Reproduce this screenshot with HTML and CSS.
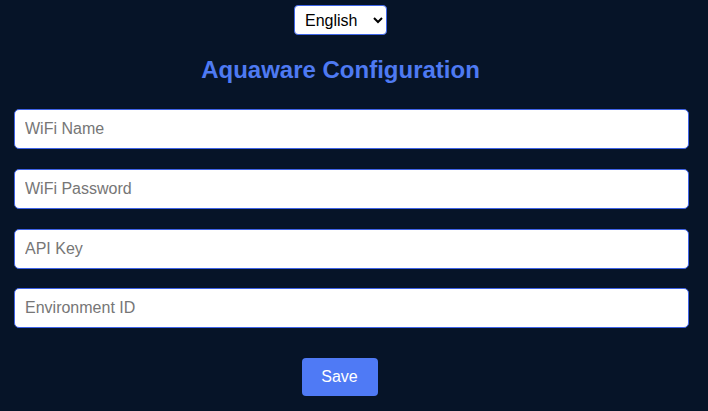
FILE: index.html
```html
<!DOCTYPE html>
<html>
<head>
<meta charset="utf-8">
<link rel="stylesheet" href="styles.css">
</head>
<body>
<div class="page">
  <div class="top">
    <select class="lang">
      <option>English</option>
    </select>
  </div>
  <h1 class="title">Aquaware Configuration</h1>
  <form class="form">
    <input class="field" type="text" placeholder="WiFi Name">
    <input class="field" type="password" placeholder="WiFi Password">
    <input class="field" type="text" placeholder="API Key">
    <input class="field" type="text" placeholder="Environment ID">
    <div class="actions">
      <button class="save" type="button">Save</button>
    </div>
  </form>
</div>
</body>
</html>
```
FILE: styles.css
```css
html, body {
  margin: 0;
  padding: 0;
  background: #061428;
  height: 100%;
}
body {
  font-family: "Liberation Sans", Arial, sans-serif;
  overflow: hidden;
}
.page {
  width: 681px;
  text-align: center;
}
.top {
  padding-top: 5px;
  height: 30px;
}
.lang {
  width: 93px;
  height: 30px;
  font-family: "Liberation Sans", Arial, sans-serif;
  font-size: 16px;
  color: #000;
  background: #fff;
  border: 1px solid #3f66e8;
  border-radius: 4px;
  padding: 0 4px 0 6px;
  vertical-align: top;
}
.title {
  margin: 19px 0 0;
  height: 32px;
  line-height: 32px;
  font-size: 24px;
  font-weight: bold;
  color: #4e7af2;
}
.form {
  display: flex;
  flex-direction: column;
  gap: 20px;
  margin: 23px 0 0 14px;
  width: 675px;
}
.field {
  box-sizing: border-box;
  width: 675px;
  height: 40px;
  margin: 0;
  padding: 0 10px;
  font-family: "Liberation Sans", Arial, sans-serif;
  font-size: 16px;
  background: #fff;
  border: 1px solid #3f63e6;
  border-radius: 5px;
  outline: none;
}
.field::placeholder {
  color: #767676;
}
.form .field:nth-child(4) {
  margin-top: -1px;
}
.actions {
  width: 679px;
  margin-left: -14px;
  margin-top: 10px;
  text-align: center;
}
.save {
  width: 76px;
  height: 38px;
  background: #4f7af5;
  color: #fff;
  border: none;
  border-radius: 4px;
  font-family: "Liberation Sans", Arial, sans-serif;
  font-size: 16px;
}
```
